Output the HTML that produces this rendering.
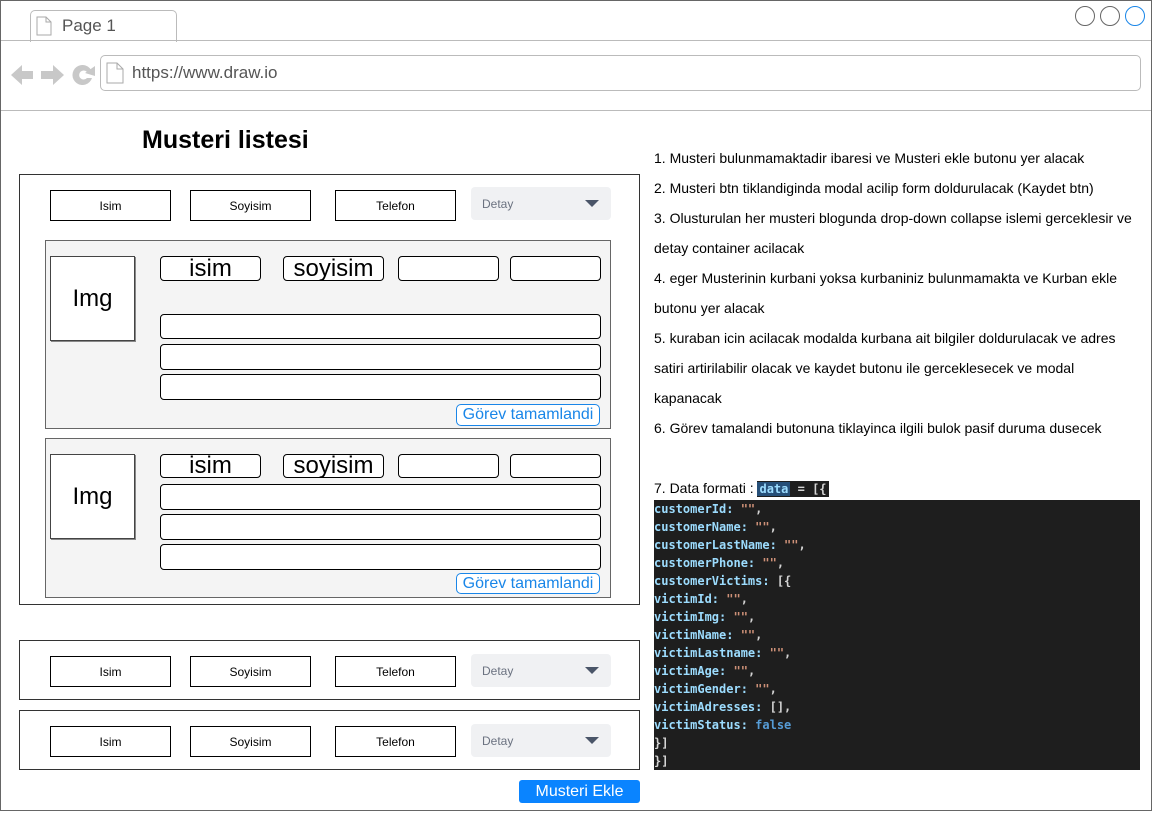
<!DOCTYPE html>
<html><head><meta charset="utf-8"><style>
*{box-sizing:border-box;margin:0;padding:0}
body{width:1152px;height:828px;background:#fff;position:relative;font-family:"Liberation Sans",Arial,sans-serif;overflow:hidden}
.a{position:absolute}
.hb{position:absolute;border:1px solid #000;background:#fff;font-size:12px;display:flex;align-items:center;justify-content:center}
.det{position:absolute;background:#f0f1f3;border-radius:4px;font-size:12px;color:#6b7280;padding-left:11px;display:flex;align-items:center}
.det:after{content:"";position:absolute;right:12px;top:13px;border-left:7px solid transparent;border-right:7px solid transparent;border-top:7px solid #4a5568}
.rb{position:absolute;border:1px solid #000;border-radius:4px;background:#fff;font-size:24px;display:flex;align-items:center;justify-content:center;line-height:1}
.img{position:absolute;border:1px solid #444;background:#fff;font-size:24px;display:flex;align-items:center;justify-content:center;box-shadow:1px 1px 0 #888}
.gb{position:absolute;border:1px solid #1a86e8;border-radius:5px;color:#1a86e8;font-size:16px;display:flex;align-items:center;justify-content:center;background:#fff}
.rt{position:absolute;left:654px;font-size:14px;color:#000;white-space:nowrap}
.code{position:absolute;left:654px;top:500px;width:486px;height:270px;background:#1e1e1e;font-family:"DejaVu Sans Mono","Liberation Mono",monospace;font-size:12px;font-weight:bold;color:#9cdcfe;line-height:18px;white-space:pre}
.s{color:#ce9178}.w{color:#d4d4d4}.f{color:#569cd6}
</style></head><body>
<div class="a" style="left:0;top:0;width:1152px;height:811px;border:1px solid #666"></div>
<div class="a" style="left:30px;top:10px;width:147px;height:32px;border:1px solid #bbb;border-bottom:none;border-radius:5px 5px 0 0;background:#fff"></div>
<svg class="a" style="left:36px;top:16px" width="16" height="20"><path d="M1 1h9l5 5v13H1z" fill="#fff" stroke="#aaa"/><path d="M10 1v5h5" fill="none" stroke="#aaa"/></svg>
<div class="a" style="left:62px;top:16px;font-size:17px;color:#555">Page 1</div>
<div class="a" style="left:1px;top:40px;width:1150px;height:1px;background:#bbb"></div>
<div class="a" style="left:1px;top:110px;width:1150px;height:1px;background:#bbb"></div>
<svg class="a" style="left:10px;top:62px" width="88" height="26">
<path d="M1 13L12 3v6h11v8H12v6z" fill="#c8c8c8"/>
<path d="M54 13L43 3v6H31v8h12v6z" fill="#c8c8c8"/>
<path d="M82 10 A10 10 0 1 0 82 16 L77 16 A4.5 4.5 0 1 1 77 10 Z" fill="#c8c8c8"/>
<path d="M85 4 L85 14 L75 11 Z" fill="#c8c8c8"/>
</svg>
<div class="a" style="left:100px;top:55px;width:1041px;height:36px;border:1px solid #bbb;border-radius:5px"></div>
<svg class="a" style="left:106px;top:62px" width="18" height="22"><path d="M1 1h10l6 6v14H1z" fill="#fff" stroke="#aaa"/><path d="M11 1v6h6" fill="none" stroke="#aaa"/></svg>
<div class="a" style="left:132px;top:63px;font-size:17px;color:#555">https://www.draw.io</div>
<div class="a" style="left:1075px;top:6px;width:20px;height:20px;border:1px solid #666;border-radius:50%"></div>
<div class="a" style="left:1100px;top:6px;width:20px;height:20px;border:1px solid #666;border-radius:50%"></div>
<div class="a" style="left:1125px;top:6px;width:20px;height:20px;border:1px solid #1a86e8;border-radius:50%"></div>

<div class="a" style="left:142px;top:126px;font-size:25px;font-weight:bold">Musteri listesi</div>

<div class="a" style="left:19px;top:174px;width:621px;height:431px;border:1px solid #333"></div>
<div class="hb" style="left:50px;top:190px;width:121px;height:31px">Isim</div>
<div class="hb" style="left:190px;top:190px;width:121px;height:31px">Soyisim</div>
<div class="hb" style="left:335px;top:190px;width:121px;height:31px">Telefon</div>
<div class="det" style="left:471px;top:187px;width:140px;height:33px">Detay</div>

<div class="a" style="left:45px;top:240px;width:566px;height:189px;background:#f4f4f4;border:1px solid #666"></div>
<div class="img" style="left:50px;top:256px;width:85px;height:85px">Img</div>
<div class="rb" style="left:160px;top:256px;width:101px;height:25px">isim</div>
<div class="rb" style="left:283px;top:256px;width:101px;height:25px">soyisim</div>
<div class="rb" style="left:398px;top:256px;width:101px;height:25px"></div>
<div class="rb" style="left:510px;top:256px;width:91px;height:25px"></div>
<div class="rb" style="left:160px;top:314px;width:441px;height:25px"></div>
<div class="rb" style="left:160px;top:344px;width:441px;height:26px"></div>
<div class="rb" style="left:160px;top:374px;width:441px;height:26px"></div>
<div class="gb" style="left:456px;top:404px;width:144px;height:22px">Görev tamamlandi</div>

<div class="a" style="left:45px;top:438px;width:566px;height:160px;background:#f4f4f4;border:1px solid #666"></div>
<div class="img" style="left:50px;top:454px;width:85px;height:85px">Img</div>
<div class="rb" style="left:160px;top:454px;width:101px;height:24px">isim</div>
<div class="rb" style="left:283px;top:454px;width:101px;height:24px">soyisim</div>
<div class="rb" style="left:398px;top:454px;width:101px;height:24px"></div>
<div class="rb" style="left:510px;top:454px;width:91px;height:24px"></div>
<div class="rb" style="left:160px;top:484px;width:441px;height:26px"></div>
<div class="rb" style="left:160px;top:514px;width:441px;height:26px"></div>
<div class="rb" style="left:160px;top:544px;width:441px;height:26px"></div>
<div class="gb" style="left:456px;top:573px;width:144px;height:21px">Görev tamamlandi</div>

<div class="a" style="left:19px;top:640px;width:621px;height:60px;border:1px solid #333"></div>
<div class="hb" style="left:50px;top:656px;width:121px;height:31px">Isim</div>
<div class="hb" style="left:190px;top:656px;width:121px;height:31px">Soyisim</div>
<div class="hb" style="left:335px;top:656px;width:121px;height:31px">Telefon</div>
<div class="det" style="left:471px;top:654px;width:140px;height:33px">Detay</div>

<div class="a" style="left:19px;top:710px;width:621px;height:60px;border:1px solid #333"></div>
<div class="hb" style="left:50px;top:726px;width:121px;height:31px">Isim</div>
<div class="hb" style="left:190px;top:726px;width:121px;height:31px">Soyisim</div>
<div class="hb" style="left:335px;top:726px;width:121px;height:31px">Telefon</div>
<div class="det" style="left:471px;top:724px;width:140px;height:33px">Detay</div>

<div class="a" style="left:519px;top:780px;width:121px;height:23px;background:#0a84ff;border-radius:3px;color:#fff;font-size:16px;display:flex;align-items:center;justify-content:center">Musteri Ekle</div>

<div class="rt" style="top:150px">1. Musteri bulunmamaktadir ibaresi ve Musteri ekle butonu yer alacak</div>
<div class="rt" style="top:180px">2. Musteri btn tiklandiginda modal acilip form doldurulacak (Kaydet btn)</div>
<div class="rt" style="top:210px">3. Olusturulan her musteri blogunda drop-down collapse islemi gerceklesir ve</div>
<div class="rt" style="top:240px">detay container acilacak</div>
<div class="rt" style="top:270px">4. eger Musterinin kurbani yoksa kurbaniniz bulunmamakta ve Kurban ekle</div>
<div class="rt" style="top:300px">butonu yer alacak</div>
<div class="rt" style="top:330px">5. kuraban icin acilacak modalda kurbana ait bilgiler doldurulacak ve adres</div>
<div class="rt" style="top:360px">satiri artirilabilir olacak ve kaydet butonu ile gerceklesecek ve modal</div>
<div class="rt" style="top:390px">kapanacak</div>
<div class="rt" style="top:420px">6. Görev tamalandi butonuna tiklayinca ilgili bulok pasif duruma dusecek</div>
<div class="rt" style="top:480px">7. Data formati : <span style="background:#1e1e1e;font-family:'DejaVu Sans Mono',monospace;font-size:12px;font-weight:bold;padding:1px 2px 1px 0"><span style="background:#264f78;color:#9cdcfe;padding:0 2px">data</span><span class="w"> = [{</span></span></div>
<div class="code">customerId: <span class="s">""</span><span class="w">,</span>
customerName: <span class="s">""</span><span class="w">,</span>
customerLastName: <span class="s">""</span><span class="w">,</span>
customerPhone: <span class="s">""</span><span class="w">,</span>
customerVictims: <span class="w">[{</span>
victimId: <span class="s">""</span><span class="w">,</span>
victimImg: <span class="s">""</span><span class="w">,</span>
victimName: <span class="s">""</span><span class="w">,</span>
victimLastname: <span class="s">""</span><span class="w">,</span>
victimAge: <span class="s">""</span><span class="w">,</span>
victimGender: <span class="s">""</span><span class="w">,</span>
victimAdresses: <span class="w">[],</span>
victimStatus: <span class="f">false</span>
<span class="w">}]</span>
<span class="w">}]</span></div>
</body></html>
